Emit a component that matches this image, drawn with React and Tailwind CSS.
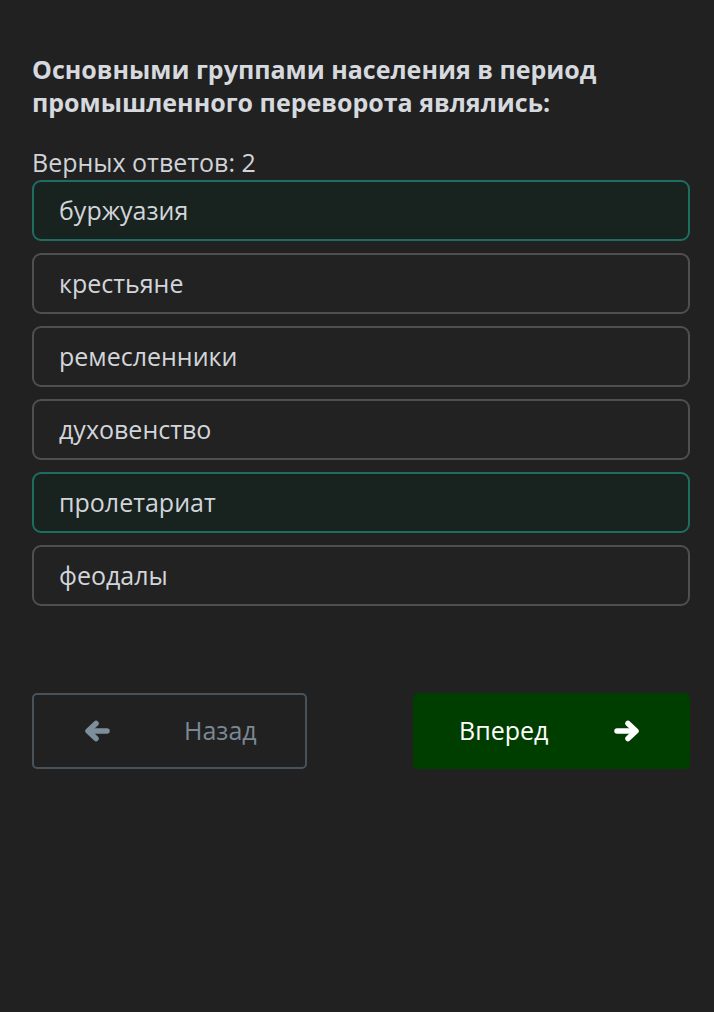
const options = [
  { text: 'буржуазия', selected: true },
  { text: 'крестьяне', selected: false },
  { text: 'ремесленники', selected: false },
  { text: 'духовенство', selected: false },
  { text: 'пролетариат', selected: true },
  { text: 'феодалы', selected: false },
]

function Arrow({ dir = 'right', className }) {
  return (
    <svg viewBox="0 0 26 22" className={className} fill="none" stroke="currentColor" strokeWidth="5.5" strokeLinecap="round" strokeLinejoin="round">
      {dir === 'left' ? (
        <>
          <path d="M23 11H5" />
          <path d="M12 3.5L4 11l8 7.5" />
        </>
      ) : (
        <>
          <path d="M3 11h18" />
          <path d="M14 3.5l8 7.5-8 7.5" />
        </>
      )}
    </svg>
  )
}

export default function App() {
  return (
    <div className="min-h-[1012px] bg-[#212121] pl-[32px] pr-[24px] pt-[53px] font-['Open_Sans',sans-serif]">
      <h1 className="text-[25px] font-bold leading-[33px] text-[#d6d9de]">
        Основными группами населения в период промышленного переворота являлись:
      </h1>
      <p className="mt-[28px] text-[25px] leading-[30px] text-[#d0d3d8]">Верных ответов: 2</p>

      <div className="mt-[3px] flex flex-col gap-[12px]">
        {options.map((o) => (
          <div
            key={o.text}
            className={`flex h-[61px] items-center rounded-[9px] border-2 pl-[25px] text-[25px] text-[#d2d5da] ${
              o.selected ? 'border-[#1d6e61] bg-[#18221e]' : 'border-[#4f4f4f] bg-[#222222]'
            }`}
          >
            {o.text}
          </div>
        ))}
      </div>

      <div className="mt-[87px] flex justify-between">
        <button className="flex h-[76px] w-[275px] items-center rounded-[5px] border-2 border-[#48525b] pl-[50px] text-[25px] text-[#7b8893]">
          <Arrow dir="left" className="h-[22px] w-[26px] text-[#7d8f9b]" />
          <span className="ml-[74px]">Назад</span>
        </button>
        <button className="flex h-[76px] w-[277px] items-center rounded-[5px] bg-[#003e00] pl-[46px] text-[25px] text-white">
          <span>Вперед</span>
          <Arrow className="ml-[66px] h-[22px] w-[26px]" />
        </button>
      </div>
    </div>
  )
}
